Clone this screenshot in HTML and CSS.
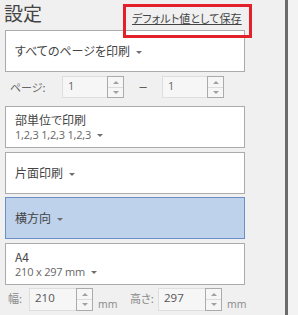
FILE: index.html
```html
<!DOCTYPE html>
<html>
  <head>
    <title>設定</title>
    <link rel="stylesheet" href="styles.css">
  </head>
  <body>
    <div class="settings">
      <div class="header">
        <div class="title">設定</div>
        <div class="save-box"><a class="save-link" href="#">デフォルト値として保存</a></div>
      </div>

      <div class="dropdown">
        <div class="main">すべてのページを印刷<span class="arrow"></span></div>
      </div>

      <div class="range-row">
        <span class="label">ページ:</span>
        <div class="spin">
          <div class="spin-field">1</div>
          <div class="spin-btns"><div class="up"></div><div class="down"></div></div>
        </div>
        <span class="dash">–</span>
        <div class="spin">
          <div class="spin-field">1</div>
          <div class="spin-btns"><div class="up"></div><div class="down"></div></div>
        </div>
      </div>

      <div class="dropdown two-line collate">
        <div class="main">部単位で印刷</div>
        <div class="sub">1,2,3 1,2,3 1,2,3<span class="arrow"></span></div>
      </div>

      <div class="dropdown sides">
        <div class="main">片面印刷<span class="arrow"></span></div>
      </div>

      <div class="dropdown selected">
        <div class="main">横方向<span class="arrow"></span></div>
      </div>

      <div class="dropdown two-line paper">
        <div class="main">A4</div>
        <div class="sub">210 x 297 mm<span class="arrow"></span></div>
      </div>

      <div class="size-row">
        <span class="label width-label">幅:</span>
        <div class="spin">
          <div class="spin-field">210</div>
          <div class="spin-btns"><div class="up"></div><div class="down"></div></div>
        </div>
        <span class="unit">mm</span>
        <span class="label height-label">高さ:</span>
        <div class="spin">
          <div class="spin-field">297</div>
          <div class="spin-btns"><div class="up"></div><div class="down"></div></div>
        </div>
        <span class="unit">mm</span>
      </div>
    </div>
    <div class="separator"></div>
    <div class="rest"></div>
  </body>
</html>
```

FILE: styles.css
```css
body {
  margin: 0;
  width: 298px;
  height: 315px;
  overflow: hidden;
  display: flex;
  background-color: #f0f0f0;
  font-family: "Noto Sans CJK JP", "Liberation Sans", sans-serif;
  font-feature-settings: "palt";
  color: #444;
}
.settings {
  width: 285px;
  position: relative;
}
.separator {
  width: 3px;
  background-color: #6b6b6b;
}
.rest {
  flex: 1;
  background-color: #f3f3f3;
}
.header {
  height: 30px;
}
.title {
  padding-left: 4px;
  font-size: 19px;
  line-height: 26px;
  color: #444;
}
.save-box {
  position: absolute;
  left: 123px;
  top: 4px;
  width: 123px;
  height: 28px;
  border: 3px solid #e3212b;
  z-index: 2;
}
.save-link {
  position: absolute;
  left: 6px;
  top: 4px;
  font-size: 11px;
  line-height: 14px;
  letter-spacing: 0.1px;
  color: #444;
  text-decoration: underline;
}
.dropdown {
  margin-left: 5px;
  width: 229px;
  height: 40px;
  border: 1px solid #ababab;
  background-color: #fff;
  display: flex;
  flex-direction: column;
  justify-content: center;
  padding-left: 9px;
}
.dropdown .main {
  font-size: 12px;
  line-height: 16px;
}
.dropdown .sub {
  font-size: 11px;
  line-height: 13px;
  color: #666;
  font-family: "Open Sans", "Liberation Sans", sans-serif;
  letter-spacing: -0.2px;
}
.two-line .main {
  margin-top: -2px;
}
.arrow {
  display: inline-block;
  width: 0;
  height: 0;
  margin-left: 6px;
  vertical-align: middle;
  border-left: 3px solid transparent;
  border-right: 3px solid transparent;
  border-top: 3px solid #6f6f6f;
}
.selected {
  background-color: #bed2ec;
  border-color: #6a8ec8;
}
.range-row {
  margin-top: 4px;
  height: 22px;
  display: flex;
  align-items: center;
}
.range-row .label {
  width: 52px;
  padding-left: 10px;
  font-size: 11px;
  color: #666;
}
.dash {
  width: 38px;
  text-align: center;
  font-family: "Liberation Sans", sans-serif;
  font-size: 13px;
  line-height: 16px;
  color: #555;
}
.spin {
  display: flex;
  height: 22px;
}
.spin-field {
  width: 39px;
  border: 1px solid #dedede;
  border-right: none;
  background-color: #f6f6f6;
  padding-left: 5px;
  font-family: "Open Sans", "Liberation Sans", sans-serif;
  font-size: 11px;
  line-height: 18px;
  color: #666;
}
.spin-btns {
  width: 15px;
  border: 1px solid #ababab;
  display: flex;
  flex-direction: column;
  background-color: #f6f6f6;
}
.spin-btns .up,
.spin-btns .down {
  flex: 1;
  position: relative;
}
.spin-btns .up {
  border-bottom: 1px solid #dcdcdc;
}
.spin-btns .up::after,
.spin-btns .down::after {
  content: "";
  position: absolute;
  left: 5px;
  top: 4px;
  border-left: 3px solid transparent;
  border-right: 3px solid transparent;
}
.spin-btns .up::after {
  border-bottom: 3px solid #a0a0a0;
}
.spin-btns .down::after {
  top: 3px;
  border-top: 3px solid #a0a0a0;
}
.collate {
  margin-top: 8px;
}
.sides {
  margin-top: 4px;
}
.selected {
  margin-top: 3px;
}
.paper {
  margin-top: 4px;
}
.size-row {
  margin-top: 3px;
  height: 23px;
  display: flex;
}
.size-row .spin {
  height: 23px;
}
.size-row .spin-field {
  width: 41px;
  color: #555;
  font-size: 11.5px;
}
.size-row .label {
  font-size: 11px;
  color: #8a8a8a;
  line-height: 20px;
}
.width-label {
  padding-left: 8px;
  width: 21px;
}
.height-label {
  width: 28px;
}
.unit {
  width: 37px;
  padding-left: 5px;
  box-sizing: border-box;
  font-family: "Open Sans", "Liberation Sans", sans-serif;
  font-size: 10.5px;
  color: #8a8a8a;
  align-self: flex-end;
  line-height: 14px;
}
```
